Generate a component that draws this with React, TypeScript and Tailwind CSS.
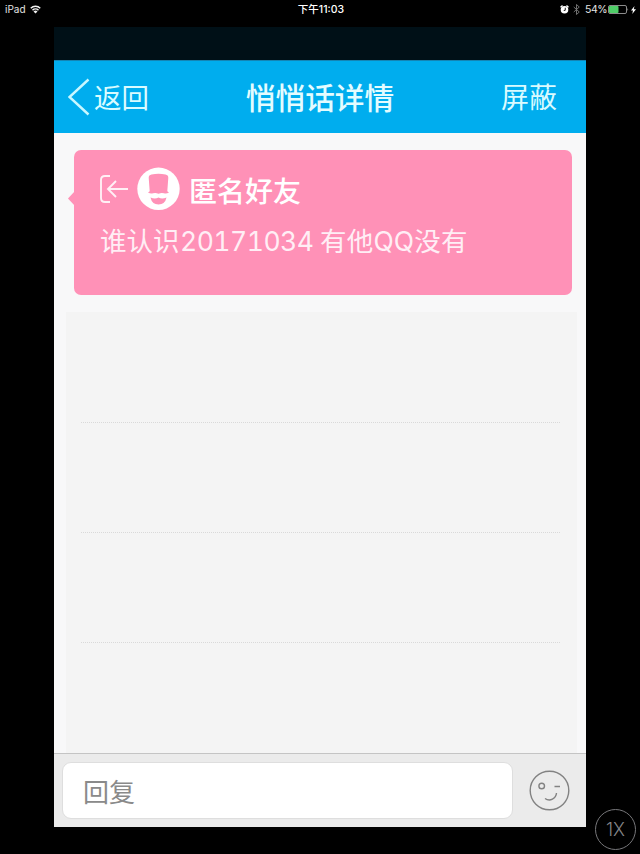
function StatusBar() {
  return (
    <div className="grid h-[27px] grid-cols-3 items-start pt-[2px] text-[10px] leading-[14px] text-[#e4e4e4]">
      <div className="flex items-center pl-[5px]">
        <span className="w-[25px] whitespace-nowrap">iPad</span>
        <svg className="h-[9px] w-[11px]" viewBox="0 0 22 18" fill="none" stroke="#f2f2f2" strokeWidth="3">
          <path d="M1.5 6.5a13.5 13.5 0 0 1 19 0M5 10.5a8.5 8.5 0 0 1 12 0" />
          <path d="M11 17l-4-4a5.6 5.6 0 0 1 8 0z" fill="#f2f2f2" stroke="none" />
        </svg>
      </div>
      <div className="pt-px pl-[2px] text-center text-[10.5px] font-medium text-white">下午11:03</div>
      <div className="flex items-center justify-end pr-[4px]">
        <svg className="h-[9px] w-[9px]" viewBox="0 0 18 18">
          <circle cx="9" cy="9.5" r="7.6" fill="#fff" />
          <path d="M1 4.5L5 1M17 4.5L13 1" stroke="#fff" strokeWidth="2.5" />
          <path d="M10.5 5.5v5L7.5 11" stroke="#000" strokeWidth="1.8" fill="none" />
        </svg>
        <svg className="ml-[4px] h-[11px] w-[7px]" viewBox="0 0 14 22" fill="none" stroke="#7d7d7d" strokeWidth="1.8">
          <path d="M1.5 6l11 10L7 21V1l5.5 5-11 10" />
        </svg>
        <span className="ml-[5px] w-[21px] pt-px text-[10.5px] tracking-[-0.4px] whitespace-nowrap">54%</span>
        <svg className="ml-[2px] h-[9px] w-[21px]" viewBox="0 0 21 9">
          <rect x=".5" y=".5" width="18" height="8" rx="1.5" fill="none" stroke="#8b8b8b" />
          <rect x="1" y="1" width="9.5" height="7" rx="1" fill="#4fce68" />
          <path d="M19.5 3q1.4 1.5 0 3z" fill="#aaa" />
        </svg>
        <svg className="ml-[2px] h-[8px] w-[5px]" viewBox="0 0 10 16">
          <path d="M7 0L0 9h4L2.5 16 10 6.5H5.5z" fill="#fff" />
        </svg>
      </div>
    </div>
  );
}

function Header() {
  return (
    <header className="flex h-[73px] items-center justify-between border-t border-[#1484b4] bg-[#00adee] pr-[29px] pl-[14px] text-[#d9fbff]">
      <div className="flex w-[120px] items-center">
        <svg className="h-[38px] w-[22px]" viewBox="0 0 22 38" fill="none" stroke="#c8f7ff" strokeWidth="2.4">
          <path d="M20.5 1.5L1.5 19l19 17.5" />
        </svg>
        <span className="ml-[4px] pt-[2px] text-[27.5px] leading-[38px] whitespace-nowrap">返回</span>
      </div>
      <h1 className="pt-px text-[29.7px] leading-[40px] font-medium whitespace-nowrap text-[#e4fcff]">悄悄话详情</h1>
      <span className="w-[105px] pt-[2px] text-right text-[28px] leading-[40px]">屏蔽</span>
    </header>
  );
}

function WhisperCard() {
  return (
    <section className="relative ml-[20px] h-[145px] w-[498px] rounded-[7px] bg-[#ff91b7] pt-[17px] pl-[26px] text-white">
      <svg className="absolute top-[40px] left-[-6px] h-[17px] w-[7px]" viewBox="0 0 7 17">
        <path d="M7 1L0 8.5 7 16z" fill="#ff91b7" />
      </svg>
      <div className="flex h-[44px] items-center">
        <svg className="h-[28px] w-[29px]" viewBox="0 0 29 28" fill="none" stroke="#fff0f5" strokeWidth="1.9">
          <path d="M10 1H5Q1 1 1 5v18q0 4 4 4h5M28 14H8M16 6L8 14l8 8" />
        </svg>
        <svg className="ml-[8px] h-[44px] w-[43px]" viewBox="0 0 43 44">
          <circle cx="21.5" cy="21.8" r="21.2" fill="#fff" />
          <path d="M14.5 7.5Q21.5 6 28.5 7.5q2.8.5 2.8 3.200L30.300 24.300l1.700 1.200q-2.500 1.500-5 .8-2.500-1-5.500.4-3-1.400-5.500-.4-2.500.7-5-.8l1.700-1.200L11.700 10.700q0-2.700 2.800-3.200z" fill="#ff91b7" />
          <path d="M13.500 30.500q4.500 1.800 8 0 3.500 1.800 8 0-1.500 7-8 7t-8-7z" fill="#ff91b7" />
        </svg>
        <span className="ml-[9px] pt-[5px] text-[28px] leading-[40px] font-medium">匿名好友</span>
      </div>
      <p className="mt-[10px] flex text-[26.5px] leading-[40px] whitespace-nowrap text-[#ffeef5]">
        <span className="w-[80px]">谁认识</span>
        <span className="w-[140px] tracking-[-0.5px] tabular-nums">20171034</span>
        <span className="tracking-[0.2px]">有他QQ没有</span>
      </p>
    </section>
  );
}

export default function App() {
  return (
    <div className="relative h-[854px] w-[640px] overflow-hidden bg-black font-['Inter','Noto_Sans_CJK_SC',sans-serif]">
      <StatusBar />
      <main className="ml-[54px] w-[532px]">
        <div className="h-[33px] bg-[#001017]" />
        <Header />
        <div className="h-[620px] bg-[#f8f8f9] pt-[17px]">
          <WhisperCard />
          <div className="mt-[17px] ml-[12px] h-[441px] w-[511px] bg-[#f4f4f4] pr-[17px] pl-[15px]">
            <div className="h-[111px] border-b border-dotted border-[#d9d9d9]" />
            <div className="h-[110px] border-b border-dotted border-[#d9d9d9]" />
            <div className="h-[110px] border-b border-dotted border-[#d9d9d9]" />
          </div>
        </div>
        <footer className="flex h-[74px] items-center border-t border-[#c4c4c4] bg-[#ebebeb] pl-[8px]">
          <div className="flex h-[57px] w-[451px] items-center rounded-[9px] border border-[#dedede] bg-white pt-[4px] pl-[20px] text-[26px] leading-[40px] text-[#8a8a8a]">
            回复
          </div>
          <svg className="ml-[16px] h-[41px] w-[41px]" viewBox="0 0 41 41" fill="none" stroke="#828282" strokeWidth="1.4">
            <circle cx="20.5" cy="20.5" r="19.3" />
            <circle cx="12.7" cy="16" r="2.8" />
            <path d="M25.5 16.5h5.500M16 28.500c5 3.500 11 0 11.500-5.500" />
          </svg>
        </footer>
      </main>
      <div className="absolute top-[809px] left-[595px] flex h-[41px] w-[41px] items-center justify-center rounded-full border border-[#77777a] text-[18px] font-light text-[#858588]">
        1X
      </div>
    </div>
  );
}
